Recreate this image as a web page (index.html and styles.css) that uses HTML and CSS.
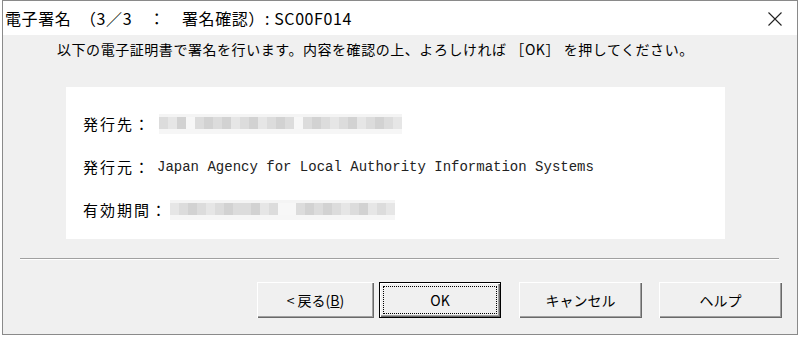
FILE: index.html
```html
<!DOCTYPE html>
<html lang="ja">
<head>
<meta charset="utf-8">
<link rel="stylesheet" href="styles.css">
</head>
<body>
<div class="window">
  <div class="titlebar">
    <span class="title">電子署名　（3／3　：　署名確認）: SC00F014</span>
    <svg class="close" width="16" height="16" viewBox="0 0 16 16"><path d="M1.5 1.5 L14.5 14.5 M14.5 1.5 L1.5 14.5" stroke="#222" stroke-width="1.1" fill="none"/></svg>
  </div>
  <div class="content">
    <p class="lead">以下の電子証明書で署名を行います。内容を確認の上、よろしければ ［OK］ を押してください。</p>
    <div class="panel">
      <div class="row">
        <span class="label">発行先：</span>
        <span class="mosaic m1">
          <i class="c2"></i><i class="c1"></i><i class="c3"></i><i class="c0"></i><i class="c2"></i><i class="c3"></i><i class="c2"></i><i class="c3"></i><i class="c1"></i><i class="c2"></i><i class="c3"></i><i class="c1"></i><i class="c2"></i><i class="c3"></i><i class="c2"></i><i class="c0"></i><i class="c2"></i><i class="c3"></i><i class="c2"></i><i class="c1"></i><i class="c2"></i><i class="c3"></i><i class="c1"></i><i class="c2"></i><i class="c3"></i><i class="c2"></i><i class="c1"></i>
        </span>
      </div>
      <div class="row">
        <span class="label">発行元：</span>
        <span class="mono">Japan Agency for Local Authority Information Systems</span>
      </div>
      <div class="row">
        <span class="label">有効期間：</span>
        <span class="mosaic m2">
          <i class="c1"></i><i class="c2"></i><i class="c3"></i><i class="c2"></i><i class="c1"></i><i class="c2"></i><i class="c3"></i><i class="c2"></i><i class="c2"></i><i class="c3"></i><i class="c1"></i><i class="c2"></i><i class="c0"></i><i class="c0"></i><i class="c2"></i><i class="c3"></i><i class="c2"></i><i class="c3"></i><i class="c2"></i><i class="c1"></i><i class="c2"></i><i class="c3"></i><i class="c1"></i><i class="c2"></i><i class="c1"></i>
        </span>
      </div>
    </div>
    <div class="sep"></div>
    <div class="buttons">
      <button class="btn back">&lt;&nbsp;戻る(<u>B</u>)</button>
      <button class="btn default"><span class="focus">OK</span></button>
      <button class="btn cancel">キャンセル</button>
      <button class="btn help">ヘルプ</button>
    </div>
  </div>
</div>
</body>
</html>
```

FILE: styles.css
```css
* { box-sizing: border-box; }
html, body { margin: 0; padding: 0; background: #ffffff; }
body {
  font-family: "Noto Sans CJK JP", "Noto Sans", sans-serif;
  color: #000;
}
.window {
  margin-left: 2px;
  width: 796px;
  height: 335px;
  border: 1px solid #8a8a8a;
  display: flex;
  flex-direction: column;
  background: #f0f0f0;
}
.titlebar {
  height: 34px;
  background: #ffffff;
  display: flex;
  align-items: center;
  justify-content: space-between;
  padding: 0 14px 0 2px;
  flex: none;
}
.title {
  font-size: 16px;
  color: #000;
  letter-spacing: 0.6px;
}
.close { display: block; margin-top: 2px; }
.content {
  flex: 1;
  display: flex;
  flex-direction: column;
}
.lead {
  margin: 4px 0 0 54px;
  font-size: 14px;
  line-height: 20px;
  letter-spacing: 0.55px;
}
.panel {
  margin: 28px 0 0 63px;
  width: 659px;
  height: 152px;
  background: #fff;
  padding: 27px 0 0 17px;
  display: flex;
  flex-direction: column;
  gap: 23px;
}
.row {
  display: flex;
  align-items: center;
  height: 20px;
}
.label {
  font-size: 15px;
  letter-spacing: 2px;
  line-height: 20px;
}
.mono {
  font-family: "Liberation Mono", "DejaVu Sans Mono", monospace;
  font-size: 14px;
  color: #222;
  margin-left: 6px;
}
.mosaic {
  display: flex;
  height: 20px;
  margin-left: 8px;
}
.m2 { margin-left: 2px; }
.mosaic i {
  display: block;
  width: 9px;
  height: 20px;
  background: linear-gradient(#f4f4f4 0, #f4f4f4 3px, var(--c) 3px, var(--c) 15px, #f6f6f6 15px);
}
.c0 { --c: #f7f7f7; }
.c1 { --c: #e6e6e6; }
.c2 { --c: #dcdcdc; }
.c3 { --c: #d2d2d2; }
.sep {
  margin: 19px 0 0 17px;
  width: 759px;
  height: 2px;
  border-top: 1px solid #a0a0a0;
  border-bottom: 1px solid #ffffff;
}
.buttons {
  display: flex;
  margin: 22px 0 0 254px;
}
.btn {
  width: 117px;
  height: 36px;
  font-family: "Noto Sans CJK JP", sans-serif;
  font-size: 14px;
  background: #f0f0f0;
  border: none;
  box-shadow: inset 1px 1px 0 #ffffff, inset -1px -1px 0 #696969, inset -2px -2px 0 #a0a0a0;
  color: #000;
  padding: 0;
  display: flex;
  align-items: center;
  justify-content: center;
}
.btn.default {
  width: 122px;
  margin-left: 5px;
  border: 1px solid #000;
  padding: 3px;
}
.btn.cancel { width: 123px; margin-left: 18px; }
.btn.help { width: 123px; margin-left: 17px; }
.focus {
  flex: 1;
  align-self: stretch;
  display: flex;
  align-items: center;
  justify-content: center;
  border: 1px dotted #000;
}
```
